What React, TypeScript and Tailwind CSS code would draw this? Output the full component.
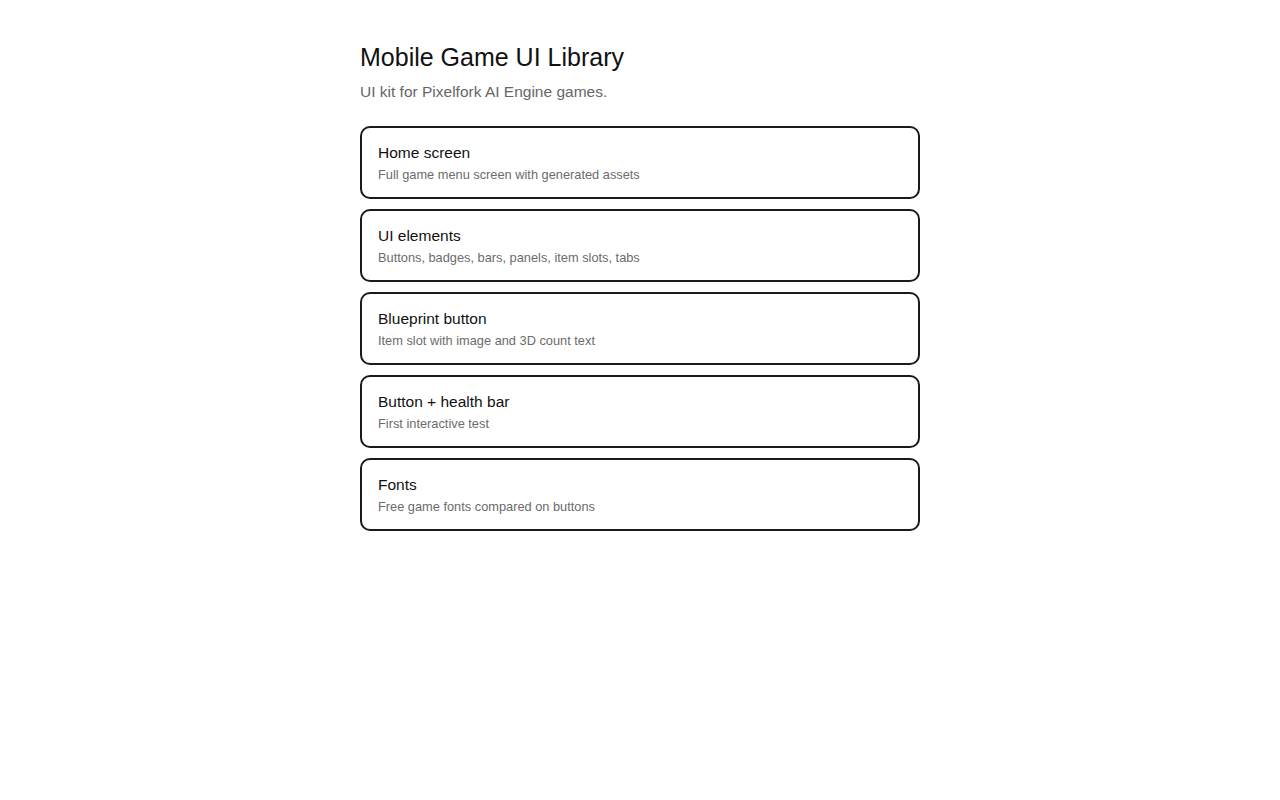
import React from "react";

const items = [
  { t: "Home screen", d: "Full game menu screen with generated assets" },
  { t: "UI elements", d: "Buttons, badges, bars, panels, item slots, tabs" },
  { t: "Blueprint button", d: "Item slot with image and 3D count text" },
  { t: "Button + health bar", d: "First interactive test" },
  { t: "Fonts", d: "Free game fonts compared on buttons" },
];

export default function App() {
  return (
    <div className="min-h-screen bg-white" style={{ fontFamily: '"Liberation Sans", Arial, sans-serif' }}>
      <div className="mx-auto w-[560px] pt-[40px]">
        <h1 className="text-[25px] leading-[34px] font-normal text-[#111]">Mobile Game UI Library</h1>
        <p className="mt-[8px] text-[15.5px] leading-[20px] text-[#666]">UI kit for Pixelfork AI Engine games.</p>
        <div className="mt-[24px] flex flex-col gap-[10px]">
          {items.map((it) => (
            <div key={it.t} className="h-[73px] rounded-[10px] border-2 border-[#1a1a1a] px-[16px] pt-[15px]">
              <div className="text-[15.5px] leading-[20px] text-[#111]">{it.t}</div>
              <div className="mt-[4px] text-[12.8px] leading-[16px] text-[#6b6b6b]">{it.d}</div>
            </div>
          ))}
        </div>
      </div>
    </div>
  );
}
